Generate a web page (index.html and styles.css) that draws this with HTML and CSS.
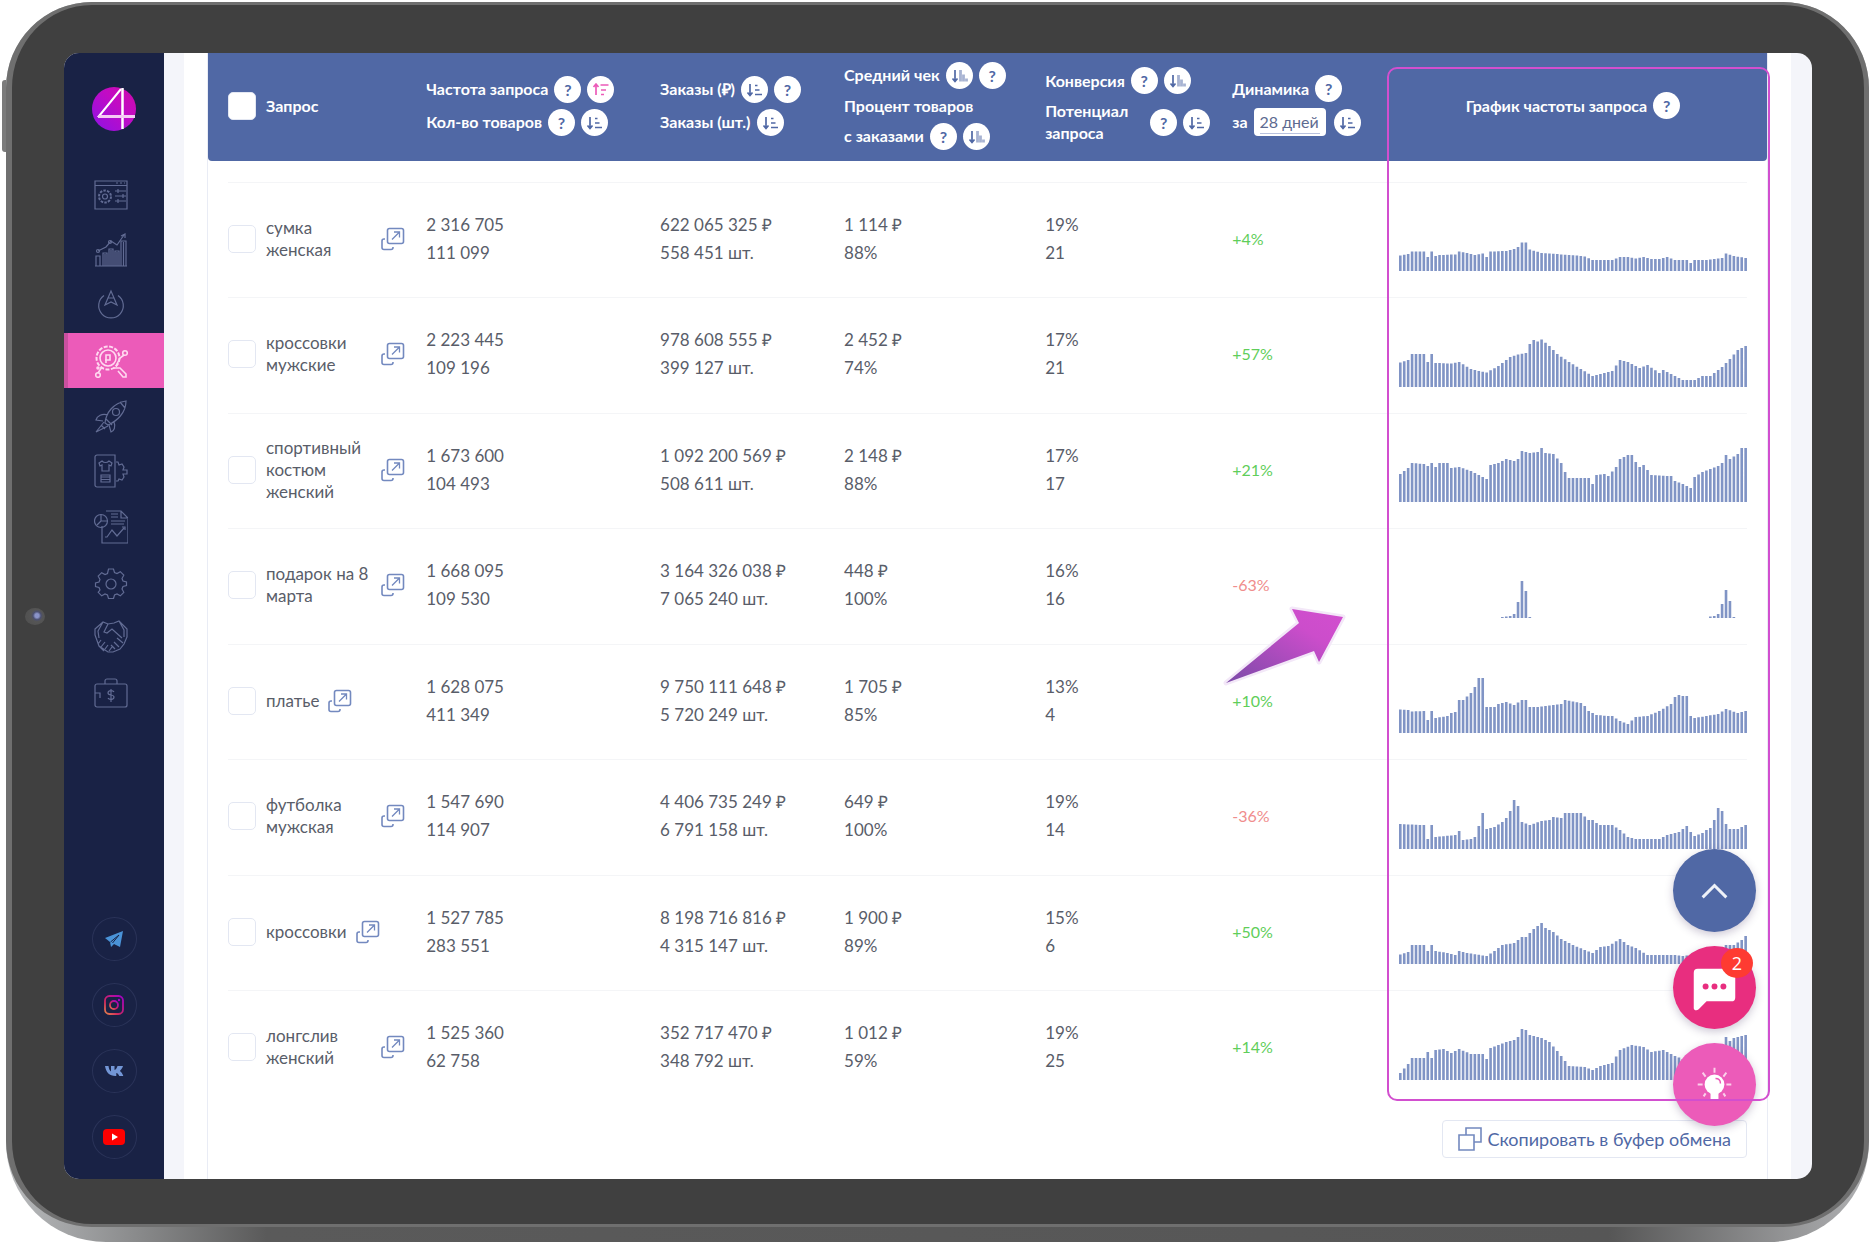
FILE: index.html
```html
<!DOCTYPE html>
<html lang="ru">
<head>
<meta charset="utf-8">
<title>Запросы</title>
<meta name="viewport" content="width=device-width, initial-scale=1">
<link rel="stylesheet" href="styles.css">
</head>
<body>
<svg width="0" height="0" class="defs" aria-hidden="true">
  <defs>
    <linearGradient id="g-arrow" x1="0" y1="1" x2="1" y2="0"><stop offset="0" stop-color="#7b4aa8"/><stop offset=".7" stop-color="#cc4dcb"/><stop offset="1" stop-color="#d24ecf"/></linearGradient>
    <linearGradient id="g-logo" x1="0" y1="1" x2="1" y2="0"><stop offset="0" stop-color="#8d12e6"/><stop offset=".6" stop-color="#c20bc4"/><stop offset="1" stop-color="#cf0aa8"/></linearGradient>
    <linearGradient id="g-insta" x1="0" y1="1" x2="1" y2="0"><stop offset="0" stop-color="#e8864a"/><stop offset=".35" stop-color="#d0285f"/><stop offset="1" stop-color="#a100c8"/></linearGradient>
    <symbol id="i-sort" viewBox="0 0 27 27"><path d="M9 8v11M6.500 16.500 9 19.500l2.500-3M14 9.500h2.500M14 14h4.500M14 18.500h7" fill="none" stroke="currentColor" stroke-width="1.700"/></symbol>
    <symbol id="i-sort-up" viewBox="0 0 27 27"><path d="M9 19V8M6.500 11 9 8l2.500 3M13.500 9h8M14 14h5M14 18.500h3" fill="none" stroke="currentColor" stroke-width="1.700"/></symbol>
    <symbol id="i-sort-col" viewBox="0 0 27 27"><path d="M9 8v11M6.500 16.500 9 19.500l2.500-3" fill="none" stroke="currentColor" stroke-width="1.700"/><path d="M14.500 8v11.500M17.500 12.500v7M20.500 16.500v3" fill="none" stroke="currentColor" stroke-width="2.800" opacity=".5"/></symbol>
    <symbol id="i-open" viewBox="0 0 24 24"><path d="M8.500 1.500h12a2 2 0 0 1 2 2v11a2 2 0 0 1-2 2h-12a2 2 0 0 1-2-2v-11a2 2 0 0 1 2-2zM4 12H3a2 2 0 0 0-2 2v6.500a2 2 0 0 0 2 2h7a2 2 0 0 0 2-2V20" fill="none" stroke="#7389bf" stroke-width="1.600"/><path d="m11 12.500 7-7M13 5h5.500v5.500" fill="none" stroke="#7389bf" stroke-width="1.300"/></symbol>
  </defs>
</svg>

<div class="tablet">
  <span class="tablet-key"></span>
  <span class="camera"></span>
  <div class="bezel">
    <div class="screen">
      <aside class="sidebar">
        <a class="logo" href="#" aria-label="Главная">
          <svg viewBox="0 0 44 44"><circle cx="22" cy="22" r="22" fill="url(#g-logo)"/><path d="M43 29H7L29 2" fill="none" stroke="#fff" stroke-width="2"/><path d="M30.500 1v41" stroke="#fff" stroke-width="2.500"/><path d="M6 29.500h37" stroke="#f6c9f5" stroke-width="3"/></svg>
        </a>
        <nav class="menu">
          <a href="#" aria-label="Панель"><svg viewBox="0 0 34 34"><path d="M1 3h32v28H1zM1 7.500h32M22 5h2M26 5h2M30 5h1M21 13h11M21 18h11M21 23h11"/><path d="M24 11v4M29 16v4M24 21v4"/><circle cx="11" cy="18.500" r="6" stroke-dasharray="2.500 1.200" stroke-width="2"/><circle cx="11" cy="18.500" r="2.500"/></svg></a>
          <a href="#" aria-label="Статистика"><svg viewBox="0 0 34 34"><path d="M2 33V23h4v10M9 33V20h4v13M15 33V16h4v17M21 33V18h4v15M27 33V8h5v25M1 33h32M11 33V21M17 33V17M23 33V19M29.500 33V9"/><path d="m4 18 8-4 5-6 6 4 7-10M27 3l4-2v4"/><circle cx="4" cy="18" r="1.500"/><circle cx="16" cy="9" r="1.500"/></svg></a>
          <a href="#" aria-label="Навигация"><svg viewBox="0 0 34 34"><path d="M10 7.500a12.300 12.300 0 1 0 14 0"/><path d="m17 3-6 14 6-3 6 3zM14 10h6"/></svg></a>
          <a href="#" class="active" aria-label="Анализ запросов"><svg viewBox="0 0 34 34"><circle cx="14" cy="14" r="11.500" stroke-dasharray="4 1.500" stroke-width="2"/><circle cx="14" cy="14" r="8"/><path d="M12 19v-8h4v5h-5M22 22l4-8 4-3M8 23l-4 6M20 24h6l6 6v3h-3l-5-6"/><circle cx="31" cy="9" r="2.300"/><circle cx="4" cy="31" r="2.300"/><circle cx="4" cy="24" r="1"/></svg></a>
          <a href="#" aria-label="Продвижение"><svg viewBox="0 0 34 34"><path d="M11 24C12 14 19 4 32 2c0 12-9 20-18 24zM26 3l5 6M14 16c-6-2-11 1-12 5l7 1M20 23c2 5 0 9-3 10l-2-7M10 23l-8 10 12-6M7 26l4 4M12 20l6 6"/><circle cx="22" cy="13" r="3.500"/></svg></a>
          <a href="#" aria-label="Товары"><svg viewBox="0 0 34 34"><path d="M3 1h18v32H3a2 2 0 0 1-2-2V3a2 2 0 0 1 2-2z"/><path d="m8 7-3 2 1 3 2-1v6h7v-6l2 1 1-3-3-2c-2 2-5 2-7 0zM7 21h9v7H7zM7 23h9M7 25.500h9M22 8h2l1 3 3-1 2 3-1 3h4v4h-4l1 3-2 3-3-1-1 2h-2"/></svg></a>
          <a href="#" aria-label="Отчёты"><svg viewBox="0 0 34 34"><path d="M12 1h15l7 7v25H8V16M27 1v7h6M17 4h7M17 7h7M17 11h14M17 14h13"/><circle cx="7" cy="11" r="6.500"/><path d="M7 4v7h6M7 11l-4 4M11 27h2l5-7 5 6 7-8M28 17h3v3"/></svg></a>
          <a href="#" aria-label="Настройки"><svg viewBox="0 0 34 34"><path d="M14.500 4h5l1 3.500 2.500 1 3.300-1.800 3.500 3.500-1.800 3.300 1 2.500 3.500 1v3.500l-3.500 1-1 2.500 1.800 3.300-3.500 3.500-3.300-1.800-2.500 1-1 3.500h-5l-1-3.500-2.500-1-3.300 1.800-3.500-3.500L6 25l-1-2.500-3.500-1V18L5 17l1-2.500-1.800-3.300 3.500-3.500L11 9.500l2.500-1z"/><circle cx="17" cy="19" r="5"/></svg></a>
          <a href="#" aria-label="Партнёры"><svg viewBox="0 0 34 34"><path d="m1 9 8-7 5 2 6-1 5-2 8 8v8l-3 7-4 5-7 3h-5L5 26 1 15zM9 2 4 11l1 7M25 1l5 9v7M14 4l-4 8 3 1 5-4 10 9M10 31l-5-5M7 20l-3 4M11 22l-4 5M14 25l-3 4M18 27l-3 4M21 29l-4-4M25 27l-5-5M29 23l-6-5"/></svg></a>
          <a href="#" aria-label="Финансы"><svg viewBox="0 0 34 34"><path d="M3 8h28a2 2 0 0 1 2 2v19a2 2 0 0 1-2 2H3a2 2 0 0 1-2-2V10a2 2 0 0 1 2-2zM11 8V5a2 2 0 0 1 2-2h8a2 2 0 0 1 2 2v3M1 17h5v5M20 16c-1-2-6-2-6 1s6 1 6 4-5 3-6 1M17 13v13"/></svg></a>
        </nav>
        <div class="social">
          <a href="#" aria-label="Telegram"><svg viewBox="0 0 20 20"><path d="M1 9 19 2l-3 16-6-3-3 3-1-5z" fill="#4a93d8"/><path d="M6.500 13 15 6l-6.500 8" fill="none" stroke="#192245" stroke-width="1"/></svg></a>
          <a href="#" aria-label="Instagram"><svg viewBox="0 0 20 20"><g fill="none" stroke="url(#g-insta)" stroke-width="1.800"><rect x="1" y="1" width="18" height="18" rx="4.500"/><circle cx="10" cy="10" r="4"/></g><circle cx="15" cy="5" r="1.200" fill="#a800c8"/></svg></a>
          <a href="#" aria-label="ВКонтакте"><svg viewBox="0 0 20 20"><path d="M1 5h3.500c.3 3 1.500 5 2.500 5.500V5h3.500v4c1.500-.5 2.500-2.500 3-4H19c-.5 2-2 3.800-3.200 5 1.400.8 2.900 2.800 3.500 5h-4c-.6-1.500-1.800-2.800-3-3v3h-1C5.500 15 2 11.500 1 5z" fill="#7396d6"/></svg></a>
          <a href="#" aria-label="YouTube"><svg class="wide" viewBox="0 0 22 20"><rect x="0" y="2" width="22" height="16" rx="4" fill="#fe0000"/><path d="m9 6.500 6 3.500-6 3.500z" fill="#fff"/></svg></a>
        </div>
      </aside>

      <main class="page">
        <div class="panel">
          <table class="queries">
            <colgroup><col class="c-name"><col class="c-freq"><col class="c-orders"><col class="c-check"><col class="c-conv"><col class="c-dyn"><col></colgroup>
            <thead>
              <tr>
                <th><label class="pick"><input type="checkbox"><span>Запрос</span></label></th>
                <th><div class="stack">
                  <div class="line"><span>Частота запроса</span><button class="dot">?</button><button class="dot hot" aria-label="Сортировать"><svg><use href="#i-sort-up"/></svg></button></div>
                  <div class="line"><span>Кол-во товаров</span><button class="dot">?</button><button class="dot" aria-label="Сортировать"><svg><use href="#i-sort"/></svg></button></div>
                </div></th>
                <th><div class="stack">
                  <div class="line"><span>Заказы (₽)</span><button class="dot" aria-label="Сортировать"><svg><use href="#i-sort"/></svg></button><button class="dot">?</button></div>
                  <div class="line"><span>Заказы (шт.)</span><button class="dot" aria-label="Сортировать"><svg><use href="#i-sort"/></svg></button></div>
                </div></th>
                <th><div class="stack">
                  <div class="line"><span>Средний чек</span><button class="dot" aria-label="Сортировать"><svg><use href="#i-sort-col"/></svg></button><button class="dot">?</button></div>
                  <div class="line"><span>Процент товаров</span></div>
                  <div class="line"><span>с заказами</span><button class="dot">?</button><button class="dot" aria-label="Сортировать"><svg><use href="#i-sort-col"/></svg></button></div>
                </div></th>
                <th><div class="stack">
                  <div class="line"><span>Конверсия</span><button class="dot">?</button><button class="dot" aria-label="Сортировать"><svg><use href="#i-sort-col"/></svg></button></div>
                  <div class="line"><span class="two">Потенциал запроса</span><button class="dot">?</button><button class="dot" aria-label="Сортировать"><svg><use href="#i-sort"/></svg></button></div>
                </div></th>
                <th><div class="stack">
                  <div class="line"><span>Динамика</span><button class="dot">?</button></div>
                  <div class="line"><label for="period">за</label><span class="period"><select id="period"><option>28 дней</option></select></span><button class="dot" aria-label="Сортировать"><svg><use href="#i-sort"/></svg></button></div>
                </div></th>
                <th><div class="line center"><span>График частоты запроса</span><button class="dot">?</button></div></th>
              </tr>
            </thead>
            <tbody id="rows"></tbody>
          </table>
          <div class="actions">
            <button class="copy"><svg viewBox="0 0 24 24"><path d="M1 8h15v15H1zM8 8V1h15v14h-7" fill="none" stroke="#7389bf" stroke-width="1.600"/></svg>Скопировать в буфер обмена</button>
          </div>
        </div>
      </main>

      <div class="fabs">
        <button class="fab up" aria-label="Наверх"><svg viewBox="0 0 84 84"><path d="m30 49 12-12 12 12" fill="none" stroke="#eef1f8" stroke-width="3"/></svg></button>
        <button class="fab chat" aria-label="Чат"><svg viewBox="0 0 84 84"><path d="M25 23h34a4 4 0 0 1 4 4v25a4 4 0 0 1-4 4H34l-8 8c-2 2-5 1-5-1V27a4 4 0 0 1 4-4z" fill="#fff"/><circle cx="33" cy="41" r="3" fill="#e82e7f"/><circle cx="42" cy="41" r="3" fill="#e82e7f"/><circle cx="51" cy="41" r="3" fill="#e82e7f"/></svg><span class="badge">2</span></button>
        <button class="fab tips" aria-label="Подсказки"><svg viewBox="0 0 84 84"><circle cx="42" cy="42" r="10" fill="#fff"/><path d="M38 50h8v7h-8z" fill="#fff"/><path d="M43 36c3 0 5 2 5 5" fill="none" stroke="#ec5bb9" stroke-width="1.500"/><path d="M42 25v5M30 30l3 4M54 30l-3 4M25 42h5M54 42h5M31 54l2-3M53 54l-2-3" stroke="#fbd0ea" stroke-width="2" fill="none"/></svg></button>
      </div>
      <div class="highlight"></div>
      <svg class="pointer" viewBox="0 0 124 82"><path d="M3 77 76 17l-7-14 51 8-24 45-5-11z" fill="url(#g-arrow)" stroke="#f3e8f8" stroke-width="5" stroke-linejoin="round" paint-order="stroke"/></svg>
    </div>
  </div>
</div>
<script src="app.js"></script>
</body>
</html>
```

FILE: styles.css
```css
* { box-sizing: border-box; }
body {
  margin: 0;
  background: #fff;
  color: #595d69;
  font: 17px/28px Lato, "Open Sans", sans-serif;
}
button, select { font: inherit; border: 0; padding: 0; cursor: pointer; }
a { color: inherit; text-decoration: none; }
.defs { position: absolute; }

/* device frame */
.tablet {
  position: relative;
  margin: 2px 4px 2px 6px;
  padding: 0 0 15px;
  border-radius: 86px 86px 100px 100px;
  background: linear-gradient(90deg, #b9bbbd 0, #5a5a5a 14%, #565656 86%, #b0b1b3 100%);
}
.bezel {
  padding: 48px 52px 45px;
  border: 2px solid #6f6f6f;
  border-width: 3px 5px 3px 6px;
  border-radius: 86px;
  background: #404040;
}
.tablet-key {
  position: absolute;
  left: -4px;
  top: 78px;
  width: 4px;
  height: 72px;
  border-radius: 3px 0 0 3px;
  background: #7c7c7c;
}
.camera {
  position: absolute;
  left: 19px;
  top: 606px;
  width: 20px;
  height: 17px;
  border-radius: 50%;
  background: radial-gradient(circle at 60% 45%, #8a93c8 0 2px, #4c5070 4px, #555 6px, #525252 10px);
}
.screen {
  position: relative;
  display: flex;
  overflow: hidden;
  border-radius: 15px;
  background: #f4f5fa;
}

/* sidebar */
.sidebar {
  display: flex;
  flex-direction: column;
  align-items: center;
  flex: 0 0 100px;
  padding: 34px 0 20px;
  background: #192245;
}
.logo, .logo svg { display: block; width: 44px; height: 44px; }
.menu { width: 100%; margin-top: 36px; }
.menu a {
  display: flex;
  align-items: center;
  justify-content: center;
  height: 55px;
  padding-right: 6px;
}
.menu a:nth-child(3n) { height: 56px; }
.menu svg {
  width: 34px;
  height: 34px;
  fill: none;
  stroke: #626c94;
  stroke-width: 1.2;
}
.menu .active { background: #ec5bb9; box-shadow: inset 4px 0 #c9509f; }
.menu .active svg { stroke: #ffd9f0; stroke-width: 1.6; }
.social { display: flex; flex-direction: column; gap: 22px; margin-top: auto; }
.social a {
  display: flex;
  align-items: center;
  justify-content: center;
  width: 45px;
  height: 44px;
  border: 1px solid #2a3358;
  border-radius: 50%;
}
.social svg { width: 20px; height: 20px; }
.social .wide { width: 22px; }

/* page */
.page { flex: 1; min-width: 0; margin: 0 21px 0 20px; padding: 0 23px; background: #fff; }
.panel { border: 1px solid #e9ecf5; border-width: 0 1px; }
.queries { width: 100%; table-layout: fixed; border-collapse: separate; border-spacing: 0; }
.c-name { width: 14%; }
.c-freq { width: 15%; }
.c-orders { width: 11.8%; }
.c-check { width: 12.9%; }
.c-conv { width: 12%; }
.c-dyn { width: 10.7%; }

th {
  height: 108px;
  padding: 0 0 3px;
  background: #5068a5;
  color: #fff;
  font-size: 16px;
  font-weight: 700;
  line-height: 22px;
  text-align: left;
  vertical-align: middle;
}
th:first-child { padding-left: 20px; border-radius: 0 0 0 4px; }
th:last-child { padding-right: 20px; border-radius: 0 0 4px 0; }
.stack { display: flex; flex-direction: column; gap: 6px; }
.line { display: flex; align-items: center; gap: 6px; white-space: nowrap; }
.center { justify-content: center; }
.two { width: 99px; white-space: normal; }
.dot {
  flex: none;
  width: 27px;
  height: 27px;
  border-radius: 50%;
  background: #fff;
  color: #5068a5;
  line-height: 27px;
  text-align: center;
}
.dot svg { display: block; width: 27px; height: 27px; }
.hot { color: #ec5bb9; }
.period { height: 28px; padding: 2px 6px; margin-right: 2px; border-radius: 4px; background: #fff; }
.period select {
  display: block;
  height: 24px;
  border-bottom: 1px solid #b9c2de;
  background: #fff;
  color: #5d6a90;
  font-weight: 400;
  appearance: none;
}

.pick { display: flex; align-items: center; gap: 10px; }
.pick input {
  flex: none;
  width: 28px;
  height: 28px;
  margin: 0;
  border: 1px solid #e3e7f2;
  border-radius: 5px;
  background: #fff;
  appearance: none;
}

tbody::before { content: ""; display: table-row; height: 21px; }
tbody tr {
  height: 115px;
  background: linear-gradient(#f4f5f7, #f4f5f7) 20px 0 / calc(100% - 40px) 1px no-repeat;
}
tbody tr:nth-child(even) { height: 116px; }
td { padding: 0 0 2px; vertical-align: middle; white-space: nowrap; }
td:first-child { padding-left: 20px; }
td:last-child { padding: 0 20px 26px 0; vertical-align: bottom; }
.name { display: flex; align-items: center; }
.name .pick { line-height: 22px; }
.name .pick span { max-width: 106px; white-space: normal; }
.name.wrap .pick { width: 144px; }
.open { margin-left: 9px; }
.open svg { display: block; width: 24px; height: 24px; }
.up-rate { color: #5fce5a; font-size: 16px; }
.down-rate { color: #f08d8d; font-size: 16px; }
.chart { display: block; width: 100%; height: 60px; fill: #8094c5; }

.actions { display: flex; justify-content: flex-end; padding: 14px 20px 21px 0; }
.copy {
  display: flex;
  align-items: center;
  gap: 5px;
  height: 38px;
  padding: 0 15px;
  border: 1px solid #e3e7f2;
  border-radius: 4px;
  background: #fff;
  color: #5068a5;
  font-size: 18px;
}
.copy svg { width: 24px; height: 24px; }

/* overlays */
.fabs {
  position: absolute;
  right: 56px;
  bottom: 53px;
  display: flex;
  flex-direction: column;
  gap: 14px;
}
.fab {
  position: relative;
  width: 83px;
  height: 83px;
  border-radius: 50%;
  box-shadow: 0 3px 8px rgba(60, 40, 90, .25);
}
.fab svg { display: block; width: 83px; height: 83px; }
.up { background: #5068a5; }
.chat { background: #e82e7f; }
.tips { background: #ec5bb9; }
.badge {
  position: absolute;
  right: 3px;
  top: 2px;
  width: 32px;
  height: 30px;
  border-radius: 50%;
  background: #fe3b32;
  color: #fff;
  font: 18px/30px "Open Sans", sans-serif;
}
.highlight {
  position: absolute;
  top: 14px;
  right: 42px;
  bottom: 78px;
  width: 383px;
  border: 2px solid #d24fcf;
  border-radius: 10px;
  pointer-events: none;
}
.pointer {
  position: absolute;
  right: 465px;
  top: 553px;
  width: 124px;
  height: 82px;
}
```

FILE: app.js
```js
const BARS = 89;

// hist holds "bar:height" points; heights between two points are interpolated
const queries = [
  { name: "сумка женская", wrap: true, freq: ["2 316 705", "111 099"], orders: ["622 065 325 ₽", "558 451 шт."], check: ["1 114 ₽", "88%"], conv: ["19%", "21"], dyn: "+4%",
    hist: "0:15.5 2:17 3:19.5 6:19.5 7:14 8:19.5 9:15 10:16 14:16.5 15:19.5 17:18 19:16 21:17.5 22:14 23:19.5 27:20 29:22 30:24 31:28.5 32:28.5 33:21.5 36:18 45:15.5 47:14.5 49:11 54:11 56:14 58:14 60:12.5 62:14 64:12 66:12 68:14 70:11 73:11 74:8 75:11 78:11 82:13 83:17.5 85:15 88:13" },
  { name: "кроссовки мужские", wrap: true, freq: ["2 223 445", "109 196"], orders: ["978 608 555 ₽", "399 127 шт."], check: ["2 452 ₽", "74%"], conv: ["17%", "21"], dyn: "+57%",
    hist: "0:24.5 2:27 3:33 6:33 7:25 8:33 9:24 13:23.5 15:25 18:18 20:16 22:14.5 25:21 28:30 30:32.5 32:34 33:43 34:47 35:45.5 36:47.5 38:41 40:33 43:25 46:18 49:11 50:12 54:16 56:27 58:25 61:19 63:22 66:14 67:17 70:11 72:7 75:7 77:11 79:11 82:20 84:28 86:37 88:41" },
  { name: "спортивный костюм женский", wrap: true, freq: ["1 673 600", "104 493"], orders: ["1 092 200 569 ₽", "508 611 шт."], check: ["2 148 ₽", "88%"], conv: ["17%", "17"], dyn: "+21%",
    hist: "0:28 2:34 3:39 6:38 7:36 8:39 9:35 10:39 12:39 13:34 15:35 18:31 20:27 22:23 23:37 25:39 27:43 29:41 30:43 31:51 33:49 35:50 36:54 37:49 39:48 41:39 42:30 43:24 48:24 49:18 50:27 52:28 53:26 55:35 56:43 58:47 59:47 60:40 61:35 62:37 64:27 68:26 69:26 70:21 72:18 74:14 75:25 77:30 81:36 82:39 83:47 84:43 86:48 87:54 88:54" },
  { name: "подарок на 8 марта", wrap: true, freq: ["1 668 095", "109 530"], orders: ["3 164 326 038 ₽", "7 065 240 шт."], check: ["448 ₽", "100%"], conv: ["16%", "16"], dyn: "-63%",
    hist: "0:0 25:0 26:1 28:2 29:4 30:16 31:37 32:27 33:1 34:0 78:0 79:1.5 80:2 81:4 82:14 83:28 84:17 85:1 86:0 88:0" },
  { name: "платье", freq: ["1 628 075", "411 349"], orders: ["9 750 111 648 ₽", "5 720 249 шт."], check: ["1 705 ₽", "85%"], conv: ["13%", "4"], dyn: "+10%",
    hist: "0:23.5 2:23 3:21.5 6:22 7:13 8:22 9:15 12:17 13:20 14:21 15:33 16:33 18:40 19:46 20:55 21:55 22:26 24:26 25:29 27:31 29:28 31:33 32:33 33:26 35:26 41:29 42:33 46:30 47:27 48:22 50:18 53:17 54:17 56:12 58:9 60:16 63:17 66:22 69:29 70:36 71:38 72:37 73:37 74:17 75:15 78:17 81:19 83:24 86:20 88:22" },
  { name: "футболка мужская", wrap: true, freq: ["1 547 690", "114 907"], orders: ["4 406 735 249 ₽", "6 791 158 шт."], check: ["649 ₽", "100%"], conv: ["19%", "14"], dyn: "-36%",
    hist: "0:25 2:24.5 6:24 7:10 8:24 9:12 14:14 15:18 16:9 18:10 19:12 20:23 21:36 22:20 24:22 26:27 27:31 28:38 29:49 30:43 31:27 33:24 36:28 38:29 39:32 41:31 42:36 46:36 48:29 49:29 50:26 51:24 54:24 56:19 58:12 60:10 66:10 68:14 71:17 73:23 74:17 75:13 77:16 78:19 79:21 80:29 81:41 82:38 83:25 84:20 86:20 88:24" },
  { name: "кроссовки", freq: ["1 527 785", "283 551"], orders: ["8 198 716 816 ₽", "4 315 147 шт."], check: ["1 900 ₽", "89%"], conv: ["15%", "6"], dyn: "+50%",
    hist: "0:9.5 2:12 3:19 6:19 7:13 8:19 9:13 12:11 14:9 15:13 17:11 22:8 24:13 26:19 29:21 31:27 32:27 34:35 36:41 37:36 39:32 41:25 44:19 47:14 49:11 51:17 53:18 56:25 58:19 60:16 63:9 65:9 70:9 72:8 80:12 83:19 85:19 87:24 88:28" },
  { name: "лонгслив женский", wrap: true, freq: ["1 525 360", "62 758"], orders: ["352 717 470 ₽", "348 792 шт."], check: ["1 012 ₽", "59%"], conv: ["19%", "25"], dyn: "+14%",
    hist: "0:7 2:16 3:22 6:22 7:28 8:22 9:30 11:31 13:27 15:31 18:26 21:26 22:21 23:32 25:35 27:38 29:40 30:43 31:51 32:50 33:45 36:42 38:38 40:29 42:19 43:14 47:13 49:10 51:14 54:17 56:30 59:35 62:33 64:28 67:30 70:24 72:21 76:28 80:35 82:36 83:43 84:39 85:42 88:45" }
];

function heights(hist) {
  const points = hist.split(" ").map(p => p.split(":").map(Number));
  const out = [];
  for (let i = 0, k = 0; i < BARS; i++) {
    while (k < points.length - 2 && points[k + 1][0] <= i) k++;
    const [x0, y0] = points[k], [x1, y1] = points[k + 1];
    out.push(y0 + (y1 - y0) * (i - x0) / (x1 - x0));
  }
  return out;
}

function chart(hist) {
  const d = heights(hist).map((h, i) => h > 0 ? `M${i * 39} 60h26v-${h.toFixed(1)}h-26z` : "").join("");
  return `<svg class="chart" viewBox="0 0 ${BARS * 39 - 13} 60" preserveAspectRatio="none"><path d="${d}"/></svg>`;
}

document.getElementById("rows").innerHTML = queries.map(q => `
  <tr>
    <td><div class="name${q.wrap ? " wrap" : ""}"><label class="pick"><input type="checkbox"><span>${q.name}</span></label>
      <a class="open" href="#" aria-label="Открыть"><svg><use href="#i-open"/></svg></a></div></td>
    ${[q.freq, q.orders, q.check, q.conv].map(c => `<td>${c[0]}<br>${c[1]}</td>`).join("")}
    <td class="${q.dyn[0] === "+" ? "up-rate" : "down-rate"}">${q.dyn}</td>
    <td>${chart(q.hist)}</td>
  </tr>`).join("");
```
